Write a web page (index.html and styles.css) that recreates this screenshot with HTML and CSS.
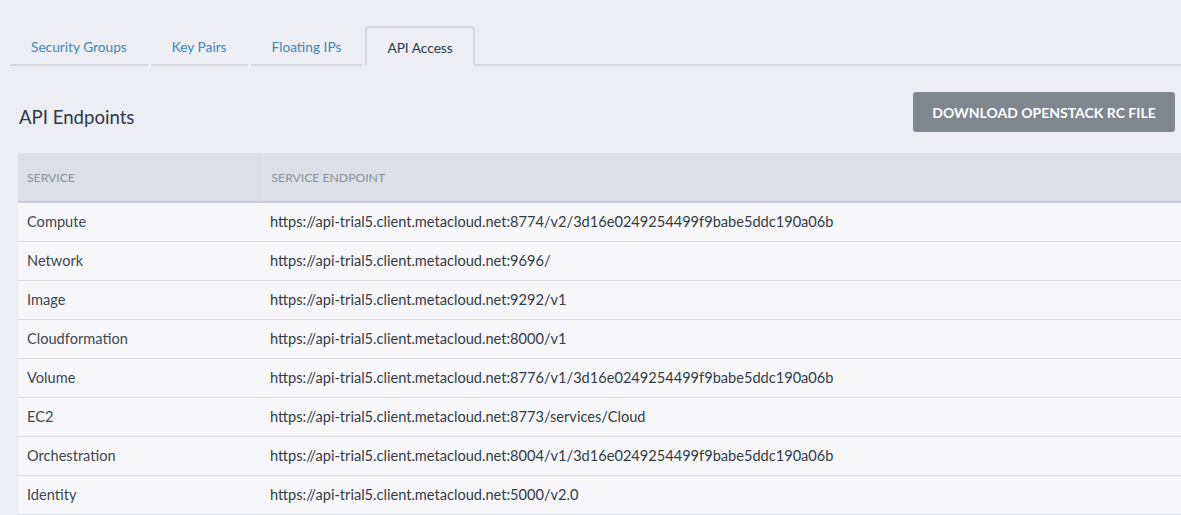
FILE: index.html
```html
<!DOCTYPE html>
<html>
<head>
<meta charset="utf-8">
<link rel="stylesheet" href="styles.css">
</head>
<body>
<div class="page">
  <ul class="tabs">
    <li class="tab"><a>Security Groups</a></li>
    <li class="tab"><a>Key Pairs</a></li>
    <li class="tab"><a>Floating IPs</a></li>
    <li class="tab active"><a>API Access</a></li>
    <li class="tab-fill"></li>
  </ul>
  <div class="content">
    <div class="head">
      <h2 class="title">API Endpoints</h2>
      <button class="btn">DOWNLOAD OPENSTACK RC FILE</button>
    </div>
    <table class="endpoints">
      <thead>
        <tr><th class="c1">Service</th><th>Service Endpoint</th></tr>
      </thead>
      <tbody>
        <tr><td class="c1">Compute</td><td class="url">https://api-trial5.client.metacloud.net:8774/v2/3d16e0249254499f9babe5ddc190a06b</td></tr>
        <tr><td class="c1">Network</td><td class="url">https://api-trial5.client.metacloud.net:9696/</td></tr>
        <tr><td class="c1">Image</td><td class="url">https://api-trial5.client.metacloud.net:9292/v1</td></tr>
        <tr><td class="c1">Cloudformation</td><td class="url">https://api-trial5.client.metacloud.net:8000/v1</td></tr>
        <tr><td class="c1">Volume</td><td class="url">https://api-trial5.client.metacloud.net:8776/v1/3d16e0249254499f9babe5ddc190a06b</td></tr>
        <tr><td class="c1">EC2</td><td class="url">https://api-trial5.client.metacloud.net:8773/services/Cloud</td></tr>
        <tr><td class="c1">Orchestration</td><td class="url">https://api-trial5.client.metacloud.net:8004/v1/3d16e0249254499f9babe5ddc190a06b</td></tr>
        <tr><td class="c1">Identity</td><td class="url">https://api-trial5.client.metacloud.net:5000/v2.0</td></tr>
      </tbody>
    </table>
  </div>
</div>
</body>
</html>
```
FILE: styles.css
```css
html, body {
  margin: 0;
  padding: 0;
  background: #edeef3;
  overflow: hidden;
}
body {
  font-family: Lato, "Open Sans", sans-serif;
  color: #3e4650;
  width: 1181px;
  height: 515px;
}
.page {
  padding-top: 26px;
}
.tabs {
  list-style: none;
  margin: 0 0 0 10px;
  padding: 0;
  display: flex;
  height: 40px;
}
.tab {
  box-sizing: border-box;
  height: 40px;
  padding: 0 21px;
  margin-right: 3px;
  border-bottom: 2px solid #d6dadd;
  display: flex;
  align-items: center;
  font-size: 13.7px;
  color: #3b88b5;
}
.tab a { padding-top: 2px; }
.tab.active {
  margin-right: 0;
  border: 2px solid #d6dadd;
  border-bottom-color: transparent;
  border-radius: 4px 4px 0 0;
  color: #2c3848;
  padding: 0 20px;
}
.tab-fill {
  flex: 1;
  border-bottom: 2px solid #d6dadd;
}
.content {
  padding: 0 0 0 18px;
}
.head {
  display: flex;
  justify-content: space-between;
  align-items: center;
  padding: 26px 6px 21px 1px;
}
.title {
  margin: 0;
  font-size: 18.6px;
  font-weight: 400;
  color: #2c3848;
  padding-top: 9px;
}
.btn {
  height: 40px;
  width: 262px;
  border: none;
  border-radius: 3px;
  background: #80868e;
  color: #ffffff;
  font-family: Lato, sans-serif;
  font-weight: 700;
  font-size: 14px;
  padding: 0;
}
.endpoints {
  border-collapse: collapse;
  width: 1180px;
  font-size: 14.6px;
}
.endpoints th {
  height: 49px;
  background: #dcdfe6;
  border-bottom: 2px solid #c9cbd6;
  text-align: left;
  font-weight: 400;
  font-size: 12.2px;
  text-transform: uppercase;
  color: #8a9099;
  padding: 0 8px 0 9px;
  box-sizing: border-box;
}
.endpoints th.c1 {
  width: 244px;
  border-right: 1px solid #e3e5ea;
}
.endpoints td {
  height: 39px;
  background: #f7f7fa;
  border-bottom: 1px solid #d8dbe2;
  padding: 0 8px 0 9px;
  box-sizing: border-box;
}
.endpoints td.c1 {
  width: 244px;
}
.endpoints td.url {
  color: #333b45;
  padding-left: 8px;
}
```
